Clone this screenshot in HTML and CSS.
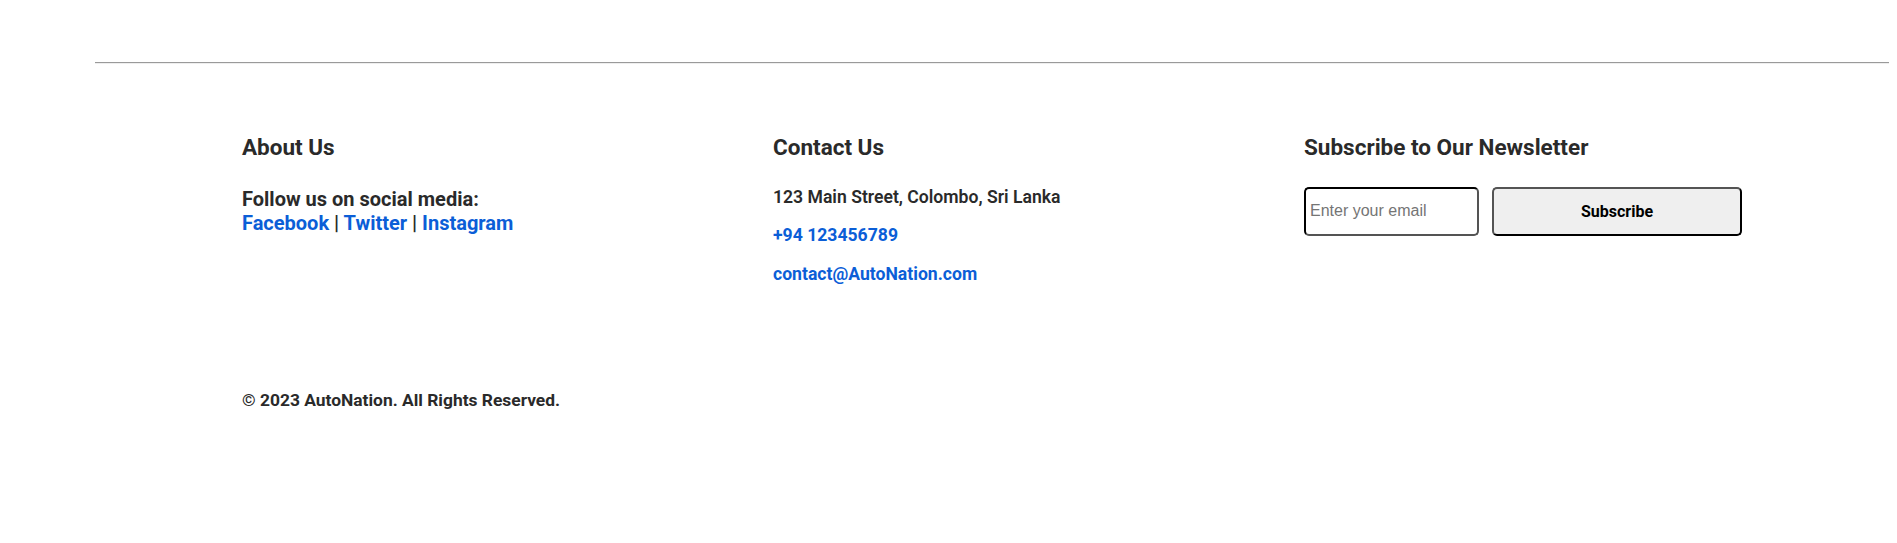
FILE: index.html
```html
<!DOCTYPE html>
<html lang="en">
<head>
<meta charset="utf-8">
<title>AutoNation Footer</title>
<link rel="stylesheet" href="styles.css">
</head>
<body>
<hr class="divider">
<footer class="footer">
  <div class="footer-grid">
    <section class="footer-col">
      <h3 class="footer-title">About Us</h3>
      <p class="social">Follow us on social media:<br>
        <a href="#">Facebook</a> | <a href="#">Twitter</a> | <a href="#">Instagram</a>
      </p>
    </section>
    <section class="footer-col">
      <h3 class="footer-title">Contact Us</h3>
      <p class="contact-line">123 Main Street, Colombo, Sri Lanka</p>
      <p class="contact-line"><a href="#">+94 123456789</a></p>
      <p class="contact-line"><a href="#">contact@AutoNation.com</a></p>
    </section>
    <section class="footer-col">
      <h3 class="footer-title">Subscribe to Our Newsletter</h3>
      <form class="subscribe-form">
        <input class="email-input" type="email" placeholder="Enter your email">
        <button class="subscribe-btn" type="button">Subscribe</button>
      </form>
    </section>
  </div>
  <p class="copyright">© 2023 AutoNation. All Rights Reserved.</p>
</footer>
</body>
</html>
```

FILE: styles.css
```css
body {
  margin: 8px;
  background: #ffffff;
  font-family: Roboto, "Noto Sans", sans-serif;
  color: #2a2a2a;
}

.divider {
  margin: 54px 0 0 87px;
  border: 0;
  border-top: 1px solid #9a9a9a;
  border-bottom: 1px solid #eeeeee;
  height: 0;
}

.footer {
  padding: 0 0 0 234px;
}

.footer-grid {
  display: grid;
  grid-template-columns: 435px 435px 445px;
  column-gap: 96px;
  padding-top: 68px;
}

.footer-title {
  margin: 0 0 24.5px;
  font-size: 22.5px;
  font-weight: 700;
  line-height: 30px;
}

.social {
  margin: 0;
  font-size: 20px;
  font-weight: 700;
  line-height: 24px;
}

a {
  color: #0b5ed7;
  text-decoration: none;
}

.contact-line {
  margin: 0 0 17.7px;
  font-size: 17.6px;
  font-weight: 600;
  line-height: 21px;
}

.contact-line a {
  font-weight: 700;
}

.subscribe-form {
  display: flex;
  gap: 13px;
}

.email-input {
  flex: none;
  box-sizing: border-box;
  width: 175px;
  height: 49px;
  padding: 0 4px;
  border: 2px inset #000000;
  border-radius: 5px;
  font-family: "Liberation Sans", Arial, sans-serif;
  font-size: 16px;
  color: #222;
}

.email-input::placeholder {
  color: #757575;
}

.subscribe-btn {
  flex: none;
  box-sizing: border-box;
  width: 250px;
  height: 49px;
  border: 2px outset #000000;
  border-radius: 5px;
  background: #efefef;
  font-family: Roboto, sans-serif;
  font-size: 16px;
  font-weight: 700;
  color: #000000;
}

.copyright {
  margin: 86px 0 0;
  font-size: 17.4px;
  font-weight: 700;
  line-height: 22px;
}
```
